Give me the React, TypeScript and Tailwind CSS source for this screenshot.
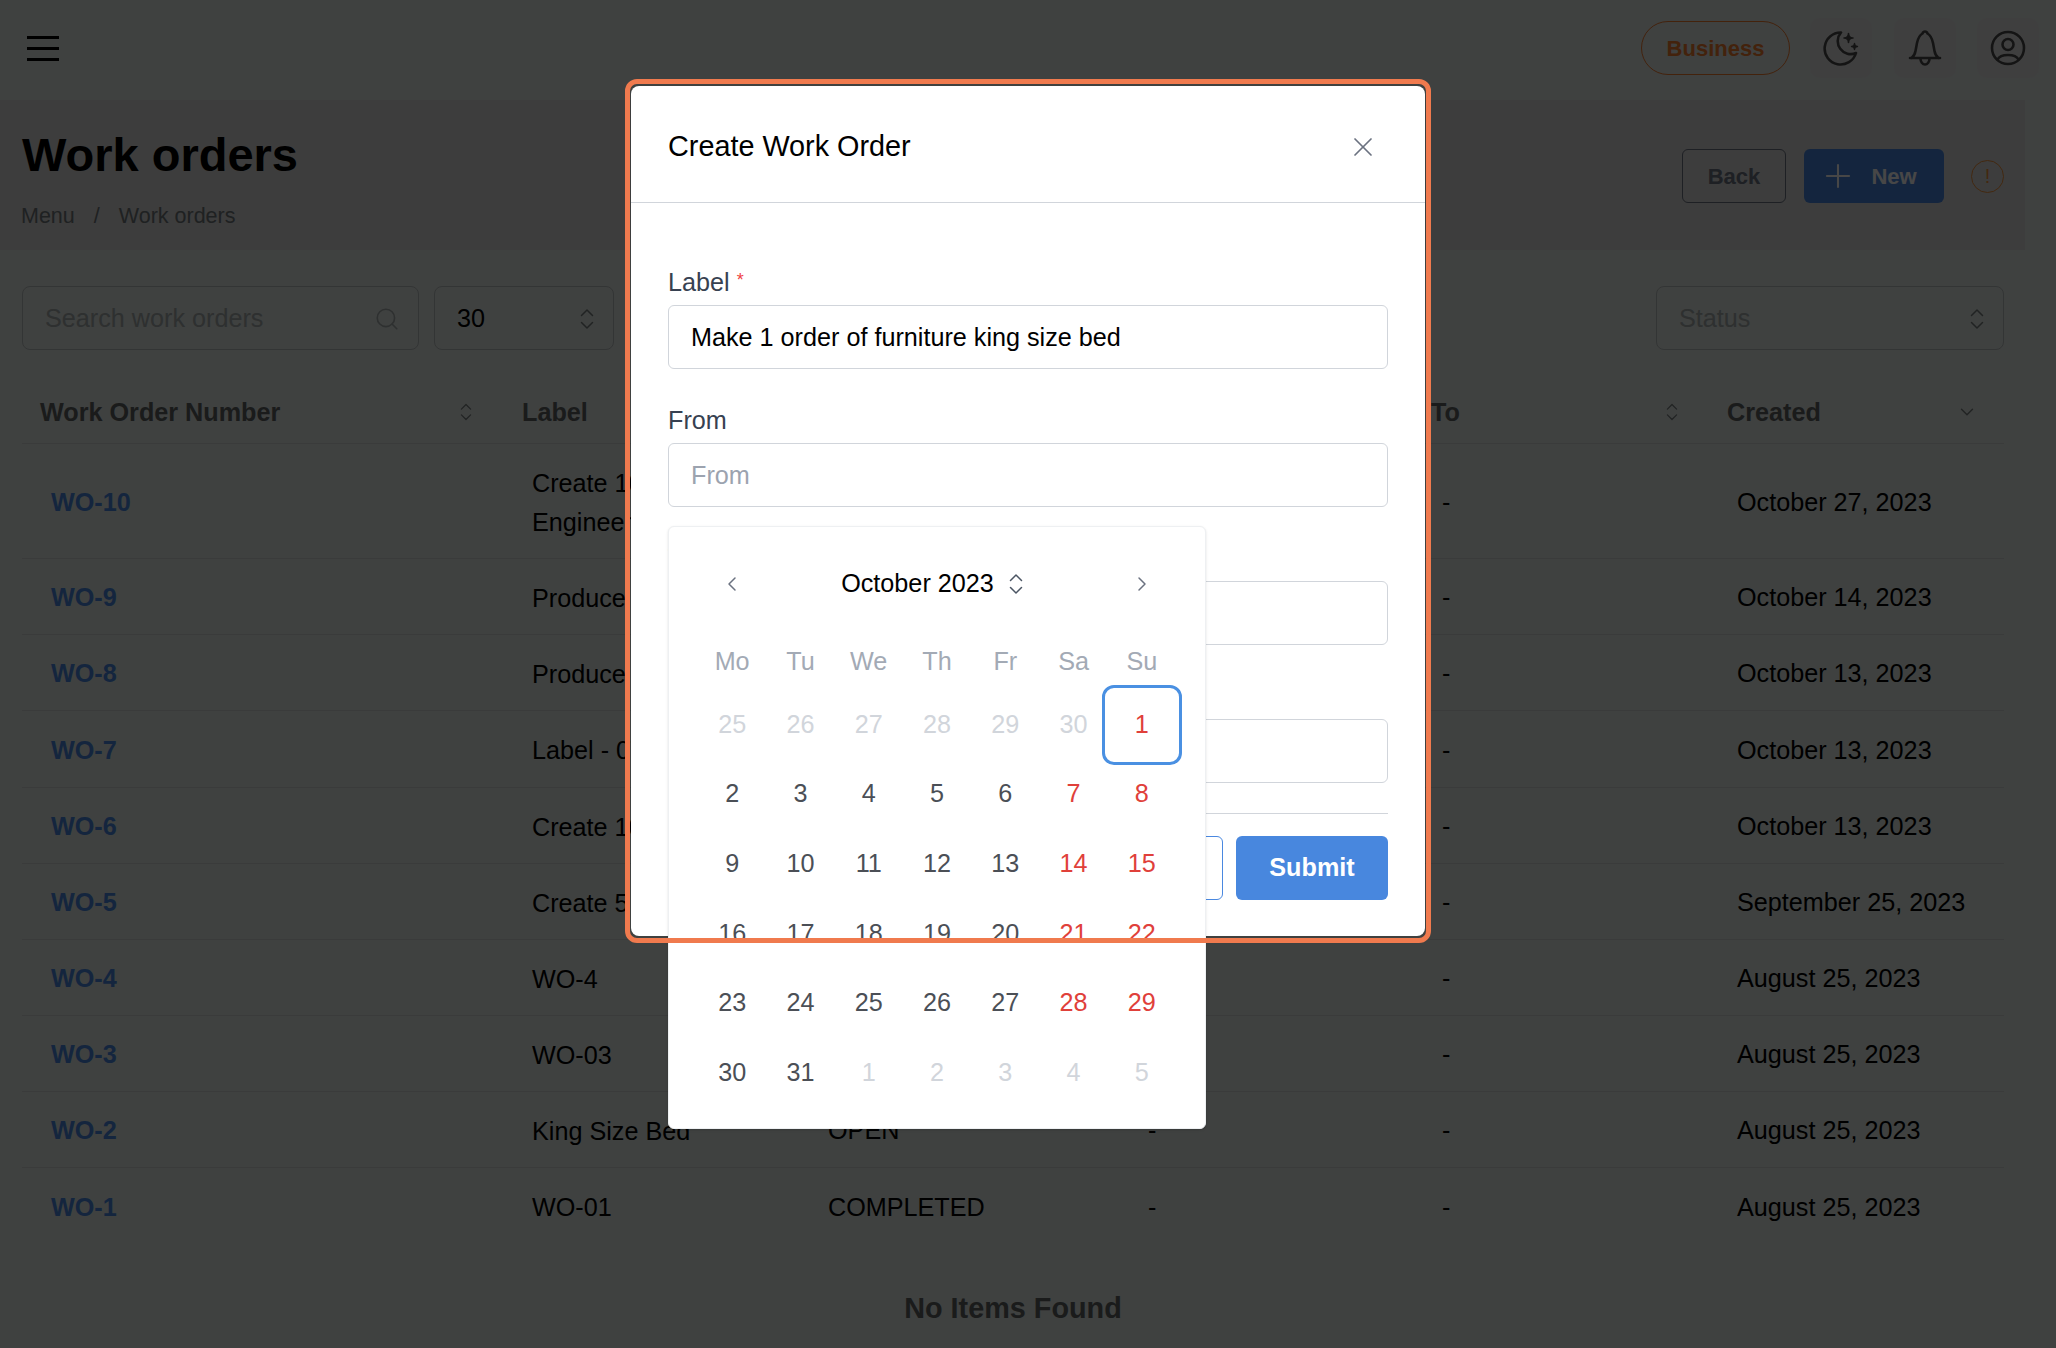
import React from 'react';
import { Search, Plus, X, ChevronLeft, ChevronRight, ChevronDown } from 'lucide-react';

const UpDown = ({ className }: { className?: string }) => (
  <svg viewBox="0 0 14 24" fill="none" stroke="currentColor" strokeWidth="1.5" strokeLinecap="round" strokeLinejoin="round" className={className}>
    <path d="M1.5 8.500 7 3l5.500 5.500" />
    <path d="M1.500 15.500 7 21l5.500-5.500" />
  </svg>
);

const rows = [
  { id: 'WO-10', label: 'Create 10 units of Engineering Kit', status: 'OPEN', created: 'October 27, 2023', height: 'h-[115px]' },
  { id: 'WO-9', label: 'Produce 20 tables', status: 'OPEN', created: 'October 14, 2023', height: 'h-[76px]' },
  { id: 'WO-8', label: 'Produce 5 chairs', status: 'OPEN', created: 'October 13, 2023', height: 'h-[76px]' },
  { id: 'WO-7', label: 'Label - 07', status: 'OPEN', created: 'October 13, 2023', height: 'h-[77px]' },
  { id: 'WO-6', label: 'Create 10 desks', status: 'OPEN', created: 'October 13, 2023', height: 'h-[76px]' },
  { id: 'WO-5', label: 'Create 5 shelves', status: 'OPEN', created: 'September 25, 2023', height: 'h-[76px]' },
  { id: 'WO-4', label: 'WO-4', status: 'OPEN', created: 'August 25, 2023', height: 'h-[76px]' },
  { id: 'WO-3', label: 'WO-03', status: 'OPEN', created: 'August 25, 2023', height: 'h-[76px]' },
  { id: 'WO-2', label: 'King Size Bed', status: 'OPEN', created: 'August 25, 2023', height: 'h-[76px]' },
  { id: 'WO-1', label: 'WO-01', status: 'COMPLETED', created: 'August 25, 2023', height: 'h-[76px]' },
];

const gridCols = 'grid grid-cols-[482px_295px_323px_291px_295px_296px]';

const weeks = [
  [25, 26, 27, 28, 29, 30, 1],
  [2, 3, 4, 5, 6, 7, 8],
  [9, 10, 11, 12, 13, 14, 15],
  [16, 17, 18, 19, 20, 21, 22],
  [23, 24, 25, 26, 27, 28, 29],
  [30, 31, 1, 2, 3, 4, 5],
];

const Field = ({ label, required, value, placeholder }: { label: string; required?: boolean; value?: string; placeholder?: string }) => (
  <div className="mb-[35px]">
    <label className="mb-[7px] flex h-[32px] items-center pt-[2px] text-[25.2px] text-[#374151]">
      {label}
      {required && <span className="ml-[7px] -mt-[6px] text-[18px] text-[#ef4444]">*</span>}
    </label>
    <input
      readOnly
      value={value}
      placeholder={placeholder}
      className="h-[64px] w-full rounded-[6px] border border-[#d1d5db] bg-white px-[22px] text-[25.2px] text-black outline-none placeholder:text-[#9ca3af]"
    />
  </div>
);

const Calendar = () => (
  <div className="absolute left-[37px] top-[440px] z-10 h-[603px] w-[538px] rounded-[6px] border border-[#eef0f2] bg-white pl-[29px] pt-[33px] shadow-sm">
    <div className="flex h-[48px] w-[478px] items-center justify-between px-[22px]">
      <ChevronLeft className="h-[24px] w-[24px] text-[#6b7280]" strokeWidth={1.5} />
      <div className="mr-[10px] flex items-center gap-[15px] text-[25.2px] text-black">
        October 2023
        <UpDown className="h-[24px] w-[14px] text-[#4b5563]" />
      </div>
      <ChevronRight className="h-[24px] w-[24px] text-[#6b7280]" strokeWidth={1.5} />
    </div>
    <div className="mt-[34px] grid h-[40px] w-[478px] grid-cols-7 items-center text-center text-[25.2px] text-[#a3aab5]">
      {['Mo', 'Tu', 'We', 'Th', 'Fr', 'Sa', 'Su'].map((d) => (
        <span key={d}>{d}</span>
      ))}
    </div>
    <div className="mt-[8px] grid w-[478px] grid-cols-7 auto-rows-[69.6px] text-center text-[25.2px]">
      {weeks.map((week, w) =>
        week.map((day, i) => {
          const outside = (w === 0 && i < 6) || (w === 5 && i > 1);
          const selected = w === 0 && i === 6;
          const color = outside ? 'text-[#d1d5db]' : i > 4 ? 'text-[#e0403a]' : 'text-[#4b4f56]';
          return (
            <div key={`${w}-${i}`} className={`relative flex items-center justify-center ${color}`}>
              {selected && (
                <span className="absolute left-[-6px] top-[-5px] h-[80px] w-[80px] rounded-[12px] border-[3px] border-[#4a90e2]" />
              )}
              {day}
            </div>
          );
        })
      )}
    </div>
  </div>
);

const Modal = () => (
  <div className="absolute inset-0 z-20 flex justify-center pt-[86px]">
    <div className="relative h-[850px] w-[794px] rounded-[8px] bg-white">
      <div className="flex h-[117px] items-center justify-between border-b border-[#d1d5db] pl-[37px] pr-[46px] pt-[5px]">
        <h2 className="text-[28.8px] text-black">Create Work Order</h2>
        <X className="h-[32px] w-[32px] text-[#6b7280]" strokeWidth={1.3} />
      </div>
      <div className="px-[37px] pt-[63px]">
        <Field label="Label" required value="Make 1 order of furniture king size bed" />
        <Field label="From" placeholder="From" />
        <Field label="To" placeholder="To" />
        <Field label="Due date" placeholder="Due date" />
        <div className="-mt-[5px] flex justify-end gap-[13px] border-t border-[#d1d5db] pt-[22px]">
          <button className="h-[64px] w-[160px] rounded-[6px] border border-[#4a88e0] bg-white text-[25.2px] font-bold text-[#4a88e0]">Cancel</button>
          <button className="h-[64px] w-[152px] rounded-[6px] bg-[#4887de] text-[25.2px] font-bold text-white">Submit</button>
        </div>
      </div>
      <Calendar />
    </div>
  </div>
);

export default function App() {
  return (
    <div className="relative h-[1348px] w-[2056px] overflow-hidden bg-[#e1e8e5] font-['Liberation_Sans',sans-serif]">
      {/* Page behind the dialog */}
      <header className="flex h-[100px] justify-between pl-[27px] pr-[17px] pt-[18px]">
        <div className="mt-[18px] flex h-[25px] w-[32px] flex-col justify-between">
          <span className="h-[3px] bg-black" />
          <span className="h-[3px] bg-black" />
          <span className="h-[3px] bg-black" />
        </div>
        <div className="flex h-[60px] items-center">
          <div className="mr-[20px] flex h-[54px] w-[149px] items-center justify-center rounded-full border border-[#f07a2e] text-[22px] font-bold text-[#f07a2e]">Business</div>
          <div className="flex h-[60px] w-[62px] items-center justify-center rounded-[10px] bg-[#e3e3e3]">
            <svg viewBox="0 0 36 36" fill="none" stroke="#4a4a4a" strokeWidth="2.6" strokeLinecap="round" strokeLinejoin="round" className="h-[36px] w-[36px]">
              <path d="M18 2.500A16 16 0 1 0 33 23 13 13 0 0 1 18 2.500z" />
              <path d="M25.500 3.500Q25.500 8 30 8 25.500 8 25.500 12.500 25.500 8 21 8 25.500 8 25.500 3.500z" strokeWidth="1.6" fill="#4a4a4a" />
              <path d="M31.500 13.500Q31.500 16.500 34.500 16.500 31.500 16.500 31.500 19.500 31.500 16.500 28.500 16.500 31.500 16.500 31.500 13.500z" strokeWidth="1.4" fill="#4a4a4a" />
            </svg>
          </div>
          <div className="ml-[22px] flex h-[60px] w-[62px] items-center justify-center rounded-[10px] bg-[#e3e3e3]">
            <svg viewBox="0 0 36 36" fill="none" stroke="#4a4a4a" strokeWidth="2.6" strokeLinecap="round" strokeLinejoin="round" className="h-[36px] w-[36px]">
              <path d="M3 28H33M4.500 28c2.500-2 3.500-4 4-7l1.500-8C11 8 13 5 15.500 3.500 16 2 17 1.500 18 1.500s2 .5 2.500 2C23 5 25 8 26 13l1.500 8c.5 3 1.500 5 4 7" />
              <path d="M13.500 28.500a4.500 6 0 0 0 9 0" />
            </svg>
          </div>
          <div className="ml-[21px] flex h-[60px] w-[62px] items-center justify-center rounded-[10px] bg-[#e3e3e3]">
            <svg viewBox="0 0 36 36" fill="none" stroke="#4a4a4a" strokeWidth="2.6" strokeLinecap="round" strokeLinejoin="round" className="h-[36px] w-[36px]">
              <circle cx="18" cy="18" r="16" />
              <circle cx="18" cy="14.500" r="5.500" />
              <path d="M7.500 29.500C9 26.500 13 25 18 25s9 1.500 10.500 4.500" />
            </svg>
          </div>
        </div>
      </header>

      <section className="flex h-[150px] w-[2025px] justify-between bg-[#dadada] pl-[22px] pr-[21px]">
        <div>
          <h1 className="mt-[29px] h-[52px] text-[47px] font-bold leading-[52px] text-black">Work orders</h1>
          <nav className="mt-[23px] flex items-center text-[21.5px] leading-[25px] text-[#6f7679]">
            <span className="-ml-[1px]">Menu</span>
            <span className="mx-[19px]">/</span>
            <span>Work orders</span>
          </nav>
        </div>
        <div className="mt-[49px] flex h-[54px] items-center">
          <button className="h-[54px] w-[104px] rounded-[6px] border border-[#6b7280] text-[22px] font-bold text-[#6b7280]">Back</button>
          <button className="ml-[18px] flex h-[54px] w-[140px] items-center justify-center gap-[14px] rounded-[6px] bg-[#4887de] pr-[12px] text-[22px] font-bold text-white">
            <Plus className="h-[38px] w-[38px]" strokeWidth={1.3} />
            New
          </button>
          <div className="ml-[27px] flex h-[33px] w-[33px] items-center justify-center rounded-full border border-[#f0903a] text-[20px] text-[#f0903a]">!</div>
        </div>
      </section>

      <main className="px-[22px] pt-[36px]">
        <div className="flex h-[64px] w-[1982px] items-center justify-between">
          <div className="flex gap-[15px]">
            <div className="flex h-[64px] w-[397px] items-center justify-between rounded-[8px] border border-[#b8bebe] pl-[22px] pr-[18px] pt-[2px] text-[25.2px] text-[#a4abab]">
              Search work orders
              <Search className="h-[26px] w-[26px]" strokeWidth={1.5} />
            </div>
            <div className="flex h-[64px] w-[180px] items-center justify-between rounded-[8px] border border-[#b8bebe] pl-[22px] pr-[19px] pt-[2px] text-[25.2px] text-black">
              30
              <UpDown className="h-[26px] w-[14px] text-[#777e7e]" />
            </div>
          </div>
          <div className="flex h-[64px] w-[348px] items-center justify-between rounded-[8px] border border-[#b8bebe] pl-[22px] pr-[19px] pt-[2px] text-[25.2px] text-[#a4abab]">
            Status
            <UpDown className="h-[26px] w-[14px] text-[#777e7e]" />
          </div>
        </div>

        <div className="mt-[24px] w-[1982px]">
          <div className={`${gridCols} h-[70px] items-center border-b border-[#cfd4d4] pt-[8px] text-[25.2px] font-bold text-[#5d6262]`}>
            <div className="flex items-center justify-between pl-[18px] pr-[32px]">Work Order Number<UpDown className="h-[20px] w-[12px] text-[#777e7e]" /></div>
            <div className="pl-[18px]">Label</div>
            <div className="pl-[18px]">Status</div>
            <div className="pl-[18px]">From</div>
            <div className="flex items-center justify-between pl-[18px] pr-[30px]">To<UpDown className="h-[20px] w-[12px] text-[#777e7e]" /></div>
            <div className="flex items-center justify-between pl-[19px] pr-[26px]">Created<ChevronDown className="h-[22px] w-[22px] text-[#777e7e]" strokeWidth={1.5} /></div>
          </div>
          {rows.map((r, i) => (
            <div key={r.id} className={`${gridCols} ${r.height} ${i < rows.length - 1 ? 'border-b border-[#cfd4d4]' : ''} items-center pt-[3px] text-[25.2px] text-black`}>
              <div className="pl-[29px] font-bold text-[#4887de]">{r.id}</div>
              <div className="pl-[28px] leading-[39px]">{r.label}</div>
              <div className="pl-[29px]">{r.status}</div>
              <div className="pl-[26px]">-</div>
              <div className="pl-[29px]">-</div>
              <div className="pl-[29px]">{r.created}</div>
            </div>
          ))}
        </div>

        <p className="mt-[47px] w-[1982px] text-center text-[28.8px] font-bold leading-[34px] text-[#5d6262]">No Items Found</p>
      </main>

      {/* Dimmed backdrop */}
      <div className="absolute inset-0 z-10 bg-black/72" />
      <Modal />

      {/* Orange highlight drawn over the screenshot */}
      <div className="pointer-events-none absolute left-[625px] top-[79px] z-30 h-[864px] w-[806px] rounded-[12px] border-[5px] border-[#f07a4e]" />
    </div>
  );
}
